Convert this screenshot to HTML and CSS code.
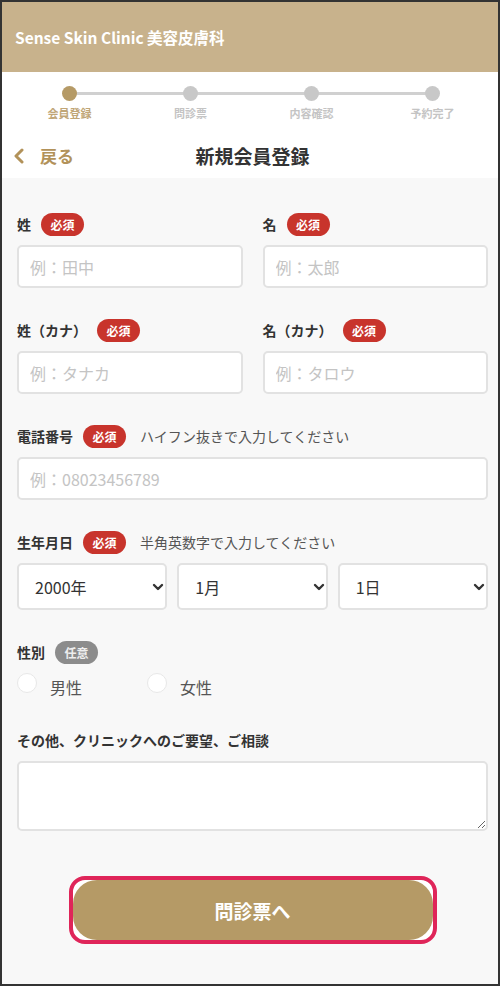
FILE: index.html
```html
<!DOCTYPE html>
<html lang="ja">
<head>
    <meta charset="UTF-8">
    <meta name="viewport" content="width=device-width, initial-scale=1.0">
    <title>新規会員登録 | Sense Skin Clinic</title>
    <link rel="stylesheet" href="styles.css">
</head>
<body>
<div class="page">
    <header class="site-header">Sense Skin Clinic 美容皮膚科</header>

    <ol class="steps">
        <li class="step active"><span class="dot"></span><span class="step-label">会員登録</span></li>
        <li class="step"><span class="dot"></span><span class="step-label">問診票</span></li>
        <li class="step"><span class="dot"></span><span class="step-label">内容確認</span></li>
        <li class="step"><span class="dot"></span><span class="step-label">予約完了</span></li>
    </ol>

    <div class="title-bar">
        <a href="#" class="back-link">
            <svg width="12" height="16" viewBox="0 0 12 16"><polyline points="9,2 3,8 9,14" fill="none" stroke="#b2925a" stroke-width="3" stroke-linecap="round" stroke-linejoin="round"/></svg>
            <span>戻る</span>
        </a>
        <h1>新規会員登録</h1>
        <span></span>
    </div>

    <form class="signup">
        <div class="row two">
            <div class="field">
                <div class="field-label"><label for="last-name">姓</label><span class="badge req">必須</span></div>
                <input type="text" id="last-name" placeholder="例：田中">
            </div>
            <div class="field">
                <div class="field-label"><label for="first-name">名</label><span class="badge req">必須</span></div>
                <input type="text" id="first-name" placeholder="例：太郎">
            </div>
        </div>

        <div class="row two">
            <div class="field">
                <div class="field-label"><label for="last-kana">姓（カナ）</label><span class="badge req">必須</span></div>
                <input type="text" id="last-kana" placeholder="例：タナカ">
            </div>
            <div class="field">
                <div class="field-label"><label for="first-kana">名（カナ）</label><span class="badge req">必須</span></div>
                <input type="text" id="first-kana" placeholder="例：タロウ">
            </div>
        </div>

        <div class="row">
            <div class="field">
                <div class="field-label"><label for="tel">電話番号</label><span class="badge req">必須</span><span class="hint">ハイフン抜きで入力してください</span></div>
                <input type="tel" id="tel" placeholder="例：08023456789">
            </div>
        </div>

        <div class="row">
            <div class="field">
                <div class="field-label"><label>生年月日</label><span class="badge req">必須</span><span class="hint">半角英数字で入力してください</span></div>
                <div class="birth-selects">
                    <div class="select-wrap">
                        <select><option>2000年</option></select>
                        <svg class="chevron" width="12" height="8" viewBox="0 0 12 8"><polyline points="2,2 6,6 10,2" fill="none" stroke="#333" stroke-width="2.4" stroke-linecap="round" stroke-linejoin="round"/></svg>
                    </div>
                    <div class="select-wrap">
                        <select><option>1月</option></select>
                        <svg class="chevron" width="12" height="8" viewBox="0 0 12 8"><polyline points="2,2 6,6 10,2" fill="none" stroke="#333" stroke-width="2.4" stroke-linecap="round" stroke-linejoin="round"/></svg>
                    </div>
                    <div class="select-wrap">
                        <select><option>1日</option></select>
                        <svg class="chevron" width="12" height="8" viewBox="0 0 12 8"><polyline points="2,2 6,6 10,2" fill="none" stroke="#333" stroke-width="2.4" stroke-linecap="round" stroke-linejoin="round"/></svg>
                    </div>
                </div>
            </div>
        </div>

        <div class="row">
            <div class="field">
                <div class="field-label"><label>性別</label><span class="badge opt">任意</span></div>
                <div class="radios">
                    <label class="radio"><input type="radio" name="gender"><span>男性</span></label>
                    <label class="radio"><input type="radio" name="gender"><span>女性</span></label>
                </div>
            </div>
        </div>

        <div class="row">
            <div class="field">
                <div class="field-label"><label for="note">その他、クリニックへのご要望、ご相談</label></div>
                <textarea id="note"></textarea>
            </div>
        </div>

        <div class="submit-ring">
            <button type="button" class="submit-btn">問診票へ</button>
        </div>
    </form>
</div>
</body>
</html>
```

FILE: styles.css
```css
* {
    box-sizing: border-box;
}

body {
    margin: 0;
    font-family: "Noto Sans CJK JP", "Noto Sans", sans-serif;
    color: #333;
    background-color: #fff;
}

.page {
    width: 500px;
    height: 986px;
    border: 2px solid #333;
    background-color: #f8f8f8;
    overflow: hidden;
}

.site-header {
    height: 70px;
    display: flex;
    align-items: center;
    padding-left: 13px;
    background-color: #c8b28c;
    color: #fff;
    font-size: 15.5px;
    font-weight: bold;
}

/* progress steps */
.steps {
    list-style: none;
    margin: 0;
    padding: 14px 5px 5px 7px;
    display: flex;
    background-color: #fff;
}

.step {
    position: relative;
    flex: 1;
    display: flex;
    flex-direction: column;
    align-items: center;
}

.step + .step::before {
    content: "";
    position: absolute;
    top: 6px;
    left: -50%;
    right: 50%;
    height: 3px;
    background-color: #d0d0d0;
}

.dot {
    position: relative;
    z-index: 1;
    width: 15px;
    height: 15px;
    border-radius: 50%;
    background-color: #c8c8c8;
}

.step-label {
    margin-top: 5px;
    font-size: 11px;
    line-height: 14px;
    font-weight: bold;
    color: #c4c4c4;
}

.step.active .dot {
    background-color: #b59a66;
}

.step.active .step-label {
    color: #c0a677;
}

/* title bar */
.title-bar {
    height: 53px;
    padding: 8px 6px 0 11px;
    display: grid;
    grid-template-columns: 1fr auto 1fr;
    align-items: center;
    background-color: #fff;
}

.back-link {
    display: flex;
    align-items: center;
    gap: 15px;
    color: #b2925a;
    text-decoration: none;
    font-size: 17px;
    font-weight: bold;
}

.title-bar h1 {
    margin: 0;
    font-size: 19px;
    font-weight: bold;
    color: #333;
}

/* form */
.signup {
    padding: 34px 10px 0 15px;
}

.row {
    margin-bottom: 30px;
}

.row.two {
    display: grid;
    grid-template-columns: 1fr 1fr;
    gap: 20px;
}

.field-label {
    height: 24px;
    display: flex;
    align-items: center;
    margin-bottom: 9px;
}

.field-label label {
    font-size: 14px;
    font-weight: bold;
    color: #333;
    margin-right: 10px;
}

.badge {
    height: 23px;
    padding: 0 9.5px;
    border-radius: 12px;
    display: flex;
    align-items: center;
    font-size: 12px;
    font-weight: bold;
    color: #fff;
}

.badge.req {
    background-color: #c8342c;
}

.badge.opt {
    background-color: #8c8c8c;
    color: #eee;
}

.hint {
    margin-left: 14px;
    font-size: 14px;
    color: #555;
}

.field input[type="text"],
.field input[type="tel"] {
    width: 100%;
    height: 43px;
    padding: 0 11px;
    border: 2px solid #e2e2e2;
    border-radius: 5px;
    background-color: #fff;
    font-family: inherit;
    font-size: 16px;
    color: #333;
}

.field input::placeholder {
    color: #c4c4c4;
}

.birth-selects {
    margin-top: 2px;
    display: grid;
    grid-template-columns: 1fr 1fr 1fr;
    gap: 10px;
}

.select-wrap {
    position: relative;
}

.select-wrap select {
    width: 100%;
    height: 47px;
    padding: 0 16px;
    -webkit-appearance: none;
    appearance: none;
    border: 2px solid #e2e2e2;
    border-radius: 5px;
    background-color: #fff;
    font-family: inherit;
    font-size: 16px;
    color: #333;
}

.chevron {
    position: absolute;
    right: 3px;
    top: 20px;
    pointer-events: none;
}

.radios {
    display: flex;
}

.radio {
    width: 130px;
    display: flex;
    align-items: flex-start;
    gap: 13px;
    font-size: 16px;
    color: #555;
}

.radio input {
    -webkit-appearance: none;
    appearance: none;
    margin: 0;
    width: 20px;
    height: 20px;
    border: 1px solid #e8e8e8;
    border-radius: 50%;
    background-color: #fff;
}

.radio span {
    margin-top: 4px;
    line-height: 21px;
}

textarea {
    display: block;
    width: 100%;
    height: 70px;
    border: 2px solid #e2e2e2;
    border-radius: 5px;
    background-color: #fff;
    font-family: inherit;
    font-size: 16px;
}

.submit-ring {
    width: 368px;
    margin: 45px auto 0;
    border: 4px solid #df2559;
    border-radius: 16px;
    background-color: #fff;
}

.submit-btn {
    display: block;
    width: 100%;
    height: 60px;
    border: none;
    border-radius: 24px;
    background-color: #b59a66;
    color: #fff;
    font-family: inherit;
    font-size: 19px;
    font-weight: bold;
    cursor: pointer;
}
```
